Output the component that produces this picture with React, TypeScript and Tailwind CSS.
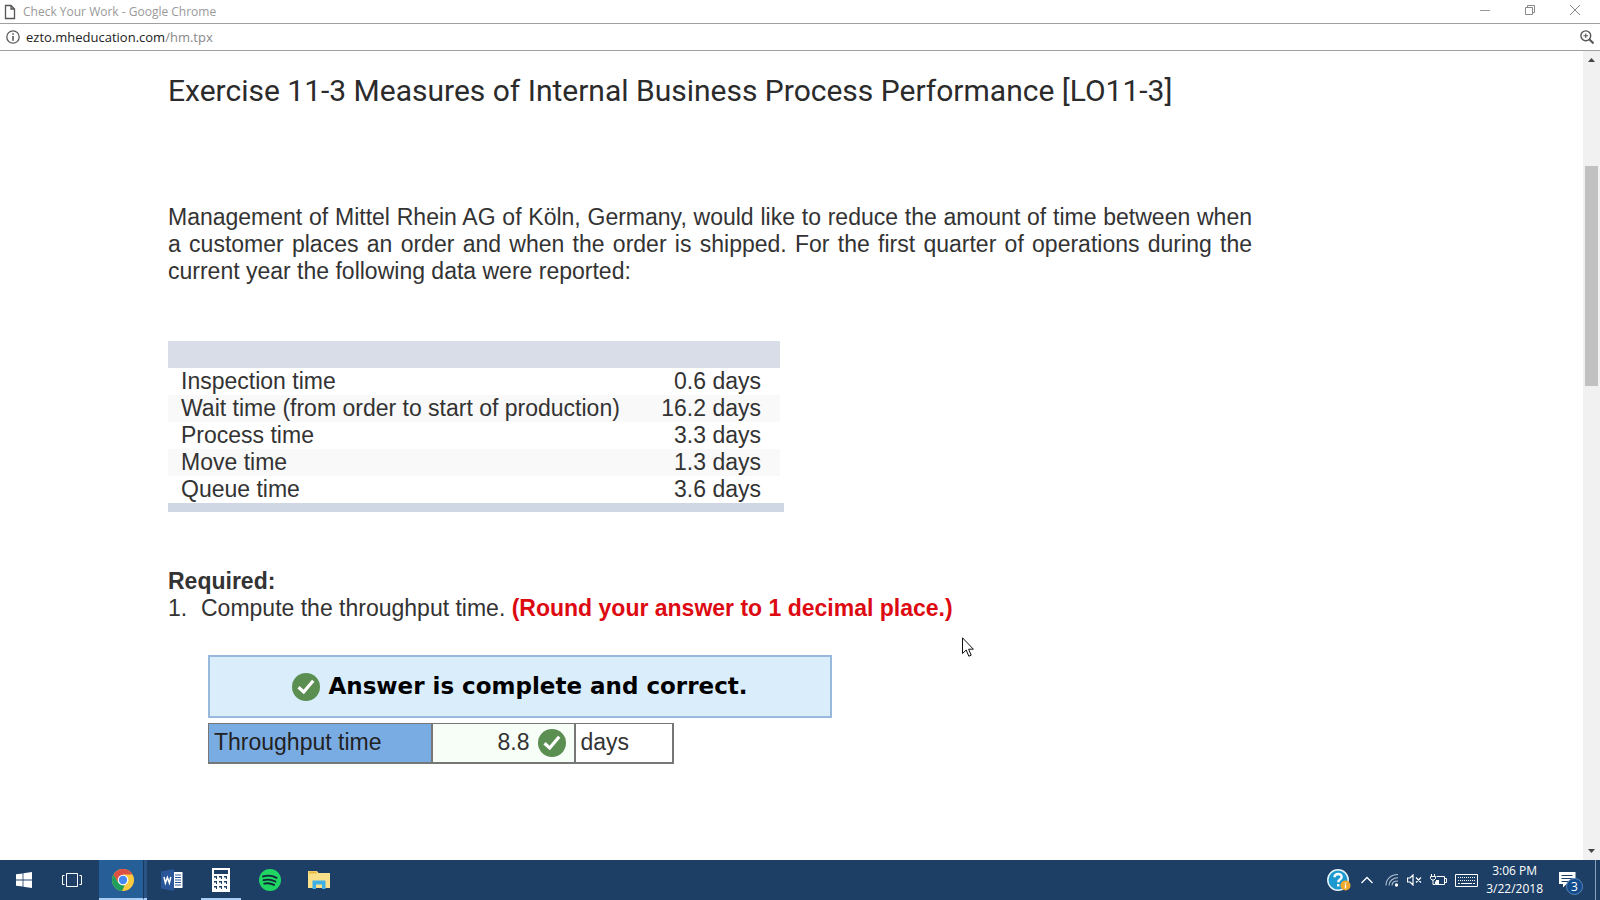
import React from "react";

const times: [string, string][] = [
  ["Inspection time", "0.6 days"],
  ["Wait time (from order to start of production)", "16.2 days"],
  ["Process time", "3.3 days"],
  ["Move time", "1.3 days"],
  ["Queue time", "3.6 days"],
];

function CheckBadge() {
  return (
    <svg viewBox="0 0 28 28" className="size-7 shrink-0" aria-hidden="true">
      <circle cx="14" cy="14" r="14" fill="#5b8f52" />
      <path d="M6.500 14.300l5.200 4.700 9.500-11.200" fill="none" stroke="#fff" strokeWidth="3.200" />
    </svg>
  );
}

function TitleBar() {
  return (
    <header className="flex h-6 shrink-0 items-center border-b border-[#a0a0a0] text-[12px] text-[#999]">
      <svg viewBox="0 0 12 16" className="ml-1 h-4 w-3" aria-hidden="true">
        <path d="M1.500 1.500h5.500l3.500 3.500v9.500h-9zM7 1.500v3.500h3.500" fill="none" stroke="#555" strokeWidth="1.3" />
      </svg>
      <span className="ml-[7px] flex-1 leading-4">Check Your Work - Google Chrome</span>
      <div className="mr-0.5 flex self-start">
        <button aria-label="Minimize" className="flex h-5 w-[45px] items-center justify-center">
          <svg viewBox="0 0 12 12" className="size-3"><path d="M1 6.500h10" stroke="#999" /></svg>
        </button>
        <button aria-label="Restore" className="flex h-5 w-[45px] items-center justify-center">
          <svg viewBox="0 0 12 12" className="size-3"><path d="M1.500 3.500h7v7h-7zM3.500 3.500v-2h7v7h-2" fill="none" stroke="#888" /></svg>
        </button>
        <button aria-label="Close" className="flex h-5 w-[46px] items-center justify-center">
          <svg viewBox="0 0 12 12" className="size-3"><path d="M1 1l10 10M11 1L1 11" stroke="#888" /></svg>
        </button>
      </div>
    </header>
  );
}

function AddressBar() {
  return (
    <div className="flex h-[27px] shrink-0 items-center border-b border-[#a0a0a0] px-1.5 text-[13px]">
      <svg viewBox="0 0 14 14" className="size-3.5" aria-hidden="true">
        <circle cx="7" cy="7" r="6.200" fill="none" stroke="#5a5a5a" strokeWidth="1.3" />
        <path d="M7 3.200v1.600M7 6v4.800" stroke="#5a5a5a" strokeWidth="1.6" />
      </svg>
      <p className="ml-1.5 flex-1 leading-5 text-[#888]">
        <span className="text-[#222]">ezto.mheducation.com</span>/hm.tpx
      </p>
      <button aria-label="Zoom">
        <svg viewBox="0 0 14 14" className="size-3.5">
          <circle cx="5.800" cy="5.800" r="4.900" fill="none" stroke="#555" strokeWidth="1.4" />
          <path d="M9.500 9.500l4 4" stroke="#555" strokeWidth="2" />
          <path d="M3.500 5.800h4.600M5.800 3.500v4.600" stroke="#555" strokeWidth="1.1" />
        </svg>
      </button>
    </div>
  );
}

function Exercise() {
  return (
    <main className="relative min-w-0 flex-1 pl-[168px] text-[23px] leading-[27px] text-[#333]">
      <h1 className="mt-5 font-[Roboto] text-[30px] leading-10 font-normal text-[#2b2b2b]">
        Exercise 11-3 Measures of Internal Business Process Performance [LO11-3]
      </h1>
      <p className="mt-[93px] max-w-[1084px] text-justify">
        Management of Mittel Rhein AG of Köln, Germany, would like to reduce the amount of time between when a customer
        places an order and when the order is shipped. For the first quarter of operations during the current year the
        following data were reported:
      </p>
      <div className="mt-14 w-[616px] border-b-[9px] border-[#cfd6e4]">
        <table className="w-[612px]">
          <thead>
            <tr className="h-[27px] bg-[#d9dde7]">
              <th aria-label="Measure" />
              <th aria-label="Time" />
            </tr>
          </thead>
          <tbody>
            {times.map(([label, value]) => (
              <tr key={label} className="even:bg-[#f9f9f9]">
                <td className="p-0 pl-[13px]">{label}</td>
                <td className="p-0 pr-[19px] text-right">{value}</td>
              </tr>
            ))}
          </tbody>
        </table>
      </div>
      <h2 className="mt-14 font-bold">Required:</h2>
      <p className="flex">
        <span className="w-[33px]">1.</span>
        <span>
          Compute the throughput time. <b className="text-[#dd0a12]">(Round your answer to 1 decimal place.)</b>
        </span>
      </p>
      <div className="mt-[33px] ml-10 flex h-[63px] w-[624px] items-center justify-center gap-2 border-2 border-[#97b9db] bg-[#d9edfb] font-['DejaVu_Sans'] text-[23px] font-bold text-black">
        <CheckBadge />
        Answer is complete and correct.
      </div>
      <table className="mt-[5px] ml-10 w-[466px] table-fixed border-collapse">
        <tbody>
          <tr className="h-[39px]">
            <th className="w-[223px] border border-r-2 border-b-2 border-[#777] bg-[#7aace4] p-0 pl-[5px] text-left font-normal text-[#222]">
              Throughput time
            </th>
            <td className="w-[143px] border border-r-2 border-b-2 border-[#777] bg-[#f7fdf7] p-0 pr-2">
              <div className="flex items-center justify-end gap-2">
                8.8
                <CheckBadge />
              </div>
            </td>
            <td className="border border-r-2 border-b-2 border-[#777] p-0 pl-[5px]">days</td>
          </tr>
        </tbody>
      </table>
      <svg viewBox="0 0 12 20" className="absolute top-[586px] left-[962px] h-5 w-3" aria-hidden="true">
        <path d="M.5.8v15.700l3.700-3.500 2.600 6.200 2.400-1-2.600-6h4.800z" fill="#fff" stroke="#111" />
      </svg>
    </main>
  );
}

function ScrollBar() {
  return (
    <div className="flex w-[17px] shrink-0 flex-col items-center bg-[#f1f1f1]">
      <svg viewBox="0 0 17 17" className="size-[17px]" aria-hidden="true"><path d="M5 11h7l-3.500-4z" fill="#444" /></svg>
      <div className="mt-[98px] h-[220px] w-[13px] bg-[#c1c1c1]" />
      <svg viewBox="0 0 17 17" className="mt-auto size-[17px]" aria-hidden="true"><path d="M5 6h7l-3.500 4z" fill="#444" /></svg>
    </div>
  );
}

function PinnedApps() {
  return (
    <nav className="flex h-full" aria-label="Pinned apps">
      <button aria-label="Start" className="flex w-12 items-center justify-center">
        <svg viewBox="0 0 16 16" className="size-4">
          <path d="M0 2.300l6.600-.9v6.200H0zM7.400 1.300L16 0v7.600H7.400zM0 8.400h6.600v6.200L0 13.700zM7.400 8.400H16V16l-8.600-1.200z" fill="#fff" />
        </svg>
      </button>
      <button aria-label="Task view" className="mr-[3px] flex w-12 items-center justify-center">
        <svg viewBox="0 0 20 16" className="h-4 w-5">
          <path d="M4.500 1.500h11v13h-11zM2.500 3.500h-2v9h2M17.500 3.500h2v9h-2" fill="none" stroke="#fff" />
        </svg>
      </button>
      <button aria-label="Google Chrome" className="flex w-[45px] items-center justify-center border-r border-b-2 border-r-[#17395f] border-b-[#a9cdf5] bg-[#265e98] pt-0.5 pl-1">
        <svg viewBox="0 0 22 22" className="size-[22px]">
          <circle cx="11" cy="11" r="11" fill="#fbcb3f" />
          <path d="M1.500 5.500A11 11 0 0 1 20.500 5.500H11L6.200 13.700z" fill="#dd5144" />
          <path d="M1.500 5.500l4.700 8.200 4.800 2.800 1.700.1L10 22A11 11 0 0 1 1.500 5.500z" fill="#1f9f5c" />
          <circle cx="11" cy="11" r="5.300" fill="#fff" />
          <circle cx="11" cy="11" r="4.200" fill="#4688f1" />
        </svg>
      </button>
      <div className="w-[3px] border-b-2 border-[#a9cdf5] bg-[#2a5484]" />
      <button aria-label="Word" className="flex w-[49px] items-center justify-center">
        <svg viewBox="0 0 22 22" className="size-[22px]">
          <path d="M12 3h9.500v16H12z" fill="#fff" />
          <path d="M14 6h6M14 8.500h6M14 11h6M14 13.500h6M14 16h6" stroke="#2b579a" />
          <path d="M0 2.500L13 0v22L0 19.500z" fill="#2b579a" />
          <path d="M3 8l1.400 6 2-5.500 2 5.500L9.800 8" fill="none" stroke="#fff" strokeWidth="1.500" />
        </svg>
      </button>
      <button aria-label="Calculator" className="ml-[5px] flex w-10 items-center justify-center border-b-2 border-[#a9cdf5] pt-0.5">
        <svg viewBox="0 0 18 24" className="h-6 w-[18px]">
          <path d="M0 0h18v24H0z" fill="#fff" />
          <path d="M2 2h14v4H2zM2 8h3v3h-1v-1.500H2zM7 8h3v3H9v-1.500H7zM12 8h3v3h-1v-1.500h-2zM2 13h3v3h-1v-1.500H2zM7 13h3v3H9v-1.500H7zM12 13h3v3h-1v-1.500h-2zM2 18h3v3h-1v-1.500H2zM7 18h3v3H9v-1.500H7zM12 18h3v3h-1v-1.500h-2z" fill="#1d3f66" />
        </svg>
      </button>
      <button aria-label="Spotify" className="ml-[5px] flex w-12 items-center justify-center">
        <svg viewBox="0 0 22 22" className="size-[22px]">
          <circle cx="11" cy="11" r="11" fill="#1fd662" />
          <path d="M4 7.500c4.500-1.400 9.500-.9 13.600 1.300M4.600 11.200c4-1.100 8-.7 11.800 1.300M5.200 14.600c3.500-.8 6.800-.5 9.900 1.200" fill="none" stroke="#12263a" strokeWidth="1.900" strokeLinecap="round" />
        </svg>
      </button>
      <button aria-label="File Explorer" className="flex w-[50px] items-center justify-center">
        <svg viewBox="0 0 22 20" className="h-5 w-[22px]">
          <path d="M0 1h9l1.500 2H22v15H0z" fill="#fbe08a" />
          <path d="M1 1.500h7.500v2H1z" fill="#e9b93f" />
          <path d="M4.500 19v-8.500h13V19H14v-4.500H8V19z" fill="#3fb0e6" />
        </svg>
      </button>
    </nav>
  );
}

function Tray() {
  return (
    <div className="ml-auto flex h-full items-center text-white">
      <button aria-label="Help">
        <svg viewBox="0 0 24 22" className="h-[22px] w-6">
          <circle cx="11" cy="11" r="10.200" fill="#1c9ad0" stroke="#e8f4fa" strokeWidth="1.500" />
          <path d="M7.500 8.300c.2-4.600 7.400-4.300 7.200-.3-.1 2.400-3.500 2.500-3.500 5.300M11.200 15v2.400" fill="none" stroke="#fff" strokeWidth="2.400" />
          <circle cx="18.500" cy="16.500" r="5" fill="#f0a92c" />
          <path d="M18.500 13.500v1.200M18.500 15.500v4" stroke="#fff" strokeWidth="1.300" />
        </svg>
      </button>
      <button aria-label="Show hidden icons" className="ml-2.5">
        <svg viewBox="0 0 12 8" className="h-2 w-3"><path d="M.5 7L6 1.500 11.500 7" fill="none" stroke="#fff" strokeWidth="1.300" /></svg>
      </button>
      <svg viewBox="0 0 14 14" className="ml-3 size-3.5" aria-label="Wi-Fi">
        <path d="M1 12.500C1 6 6 1.500 13 1.500M4 12.500C4 8 8 4.800 13 4.800M7 12.500c0-2.800 2.500-4.500 6-4.500" fill="none" stroke="#b4c3d3" strokeWidth="1.100" />
        <circle cx="11.500" cy="12" r="1.700" fill="#fff" />
      </svg>
      <svg viewBox="0 0 15 12" className="ml-2 h-3 w-[15px]" aria-label="Muted">
        <path d="M.5 4v4h2.500l3 3V1l-3 3zM9 3.500l5 5M14 3.500l-5 5" fill="none" stroke="#fff" strokeWidth="1.200" />
      </svg>
      <svg viewBox="0 0 17 12" className="ml-2 h-3 w-[17px]" aria-label="Charging">
        <path d="M6.500 2.500h8v8h-9v-3M15 4.500h1.500v4H15M1.500 0v2M4.500 0v2M.5 2.500h5v2l-1.500 1.500h-2L.5 4.500zM3 6v4.500h2" fill="none" stroke="#fff" />
        <path d="M6 6h3v4H6z" fill="#fff" />
      </svg>
      <svg viewBox="0 0 23 13" className="ml-2 h-[13px] w-[23px]" aria-label="Touch keyboard">
        <path d="M.5.5h22v12H.5zM3 9.500h2M6 9.500h11M18 9.500h2" fill="none" stroke="#fff" />
        <path d="M3 3.500h17M3 6.500h17" stroke="#fff" strokeDasharray="1 1" />
      </svg>
      <div className="ml-2 text-center text-[12px] leading-[18px]">
        <div>3:06 PM</div>
        <div>3/22/2018</div>
      </div>
      <button aria-label="3 notifications" className="relative ml-4 flex h-full w-9 items-center">
        <svg viewBox="0 0 17 17" className="size-[17px]">
          <path d="M0 0h16.500v12H7.500L4 15.500V12H0z" fill="#fff" />
          <path d="M2.500 3.500h11M2.500 6.500h11M2.500 9.500h7" stroke="#1d3f66" />
        </svg>
        <span className="absolute top-[18px] left-[7px] flex size-[17px] items-center justify-center rounded-full border border-[#5f87b5] bg-[#124b8c] text-[12px] leading-none">
          3
        </span>
      </button>
      <div className="h-full w-[5px] border-l border-[#8ea0b5]" />
    </div>
  );
}

export default function App() {
  return (
    <div className="flex h-screen flex-col overflow-hidden bg-white font-['Open_Sans',sans-serif]">
      <TitleBar />
      <AddressBar />
      <div className="flex min-h-0 flex-1 font-['Liberation_Sans',sans-serif]">
        <Exercise />
        <ScrollBar />
      </div>
      <footer className="flex h-10 shrink-0 items-center bg-[#1d3f66]">
        <PinnedApps />
        <Tray />
      </footer>
    </div>
  );
}
